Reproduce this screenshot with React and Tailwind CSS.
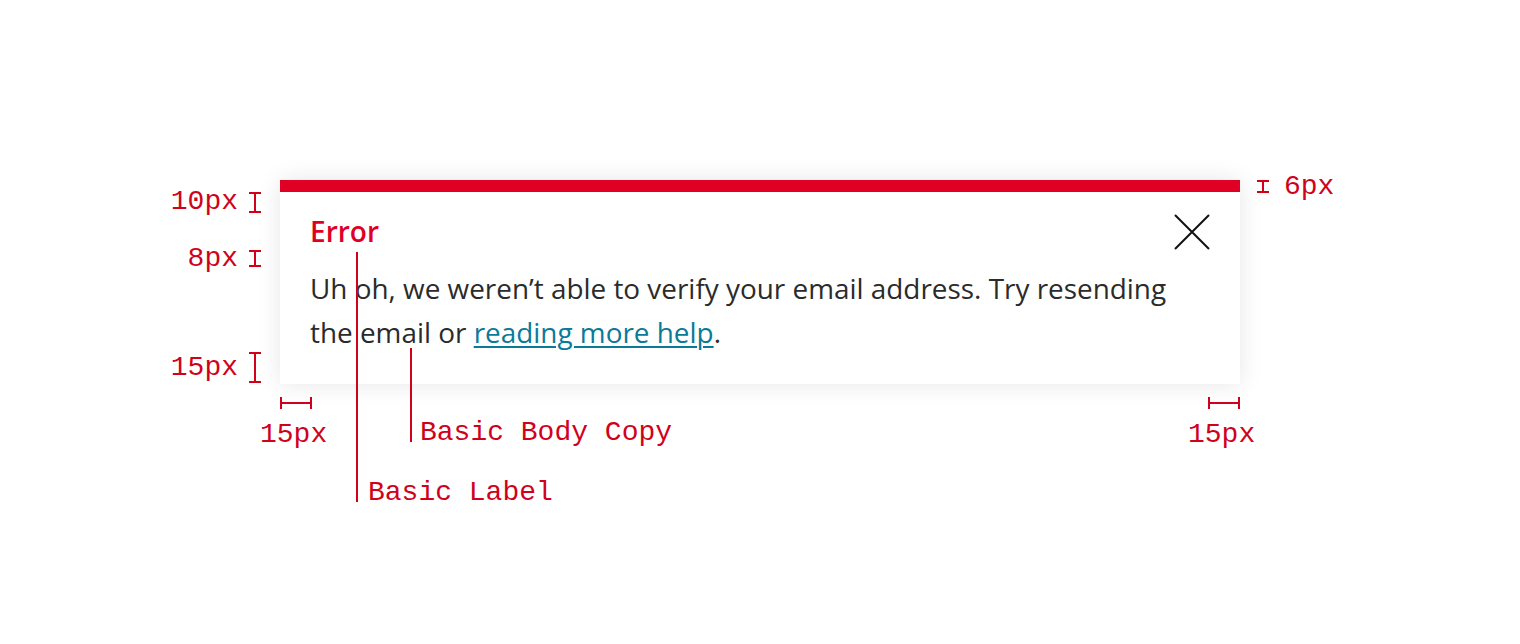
import React from 'react';

const RED = 'text-[#d0021b]';

// vertical dimension marker: stem with caps top and bottom
const VBeam = ({ className }) => (
    <div className={`absolute flex flex-col items-center w-[12px] ${className}`}>
        <div className="h-[2px] w-full bg-[#d0021b]" />
        <div className="flex-1 w-[2px] bg-[#d0021b]" />
        <div className="h-[2px] w-full bg-[#d0021b]" />
    </div>
);

// horizontal dimension marker
const HBeam = ({ className }) => (
    <div className={`absolute flex items-center h-[12px] ${className}`}>
        <div className="w-[2px] h-full bg-[#d0021b]" />
        <div className="flex-1 h-[2px] bg-[#d0021b]" />
        <div className="w-[2px] h-full bg-[#d0021b]" />
    </div>
);

const Note = ({ className, children }) => (
    <div className={`absolute whitespace-nowrap font-['Liberation_Mono',monospace] text-[28px] leading-[30px] ${RED} ${className}`}>
        {children}
    </div>
);

const CloseIcon = () => (
    <svg width="36" height="36" viewBox="0 0 36 36" fill="none" stroke="#111" strokeWidth="2">
        <path d="M1 1L35 35M35 1L1 35" />
    </svg>
);

export default function App() {
    return (
        <div className="w-[1520px] h-[644px] bg-white flex justify-center pt-[180px] font-['Open_Sans',sans-serif]">
            <div className="relative w-[960px] self-start">
                <div className="bg-white shadow-[0_0_22px_rgba(0,0,0,0.10)]">
                    <div className="h-[12px] bg-[#df0024]" />
                    <div className="relative px-[30px] pt-[20px] pb-[30px]">
                        <div className="text-[28px] leading-[38px] font-semibold text-[#df0024]">Error</div>
                        <p className="mt-[16px] pr-[40px] text-[27.9px] leading-[44px] text-[#2b2b2b]">
                            Uh oh, we weren’t able to verify your email address. Try resending the email or{' '}
                            <a href="#" className="text-[#0b7a99] underline underline-offset-[3px] decoration-[1.5px]">reading more help</a>.
                        </p>
                        <button className="absolute right-[30px] top-[22px]">
                            <CloseIcon />
                        </button>
                    </div>
                </div>

                {/* spec annotations */}
                <VBeam className="left-[-31px] top-[12px] h-[21px]" />
                <Note className="right-[1002px] top-[7px]">10px</Note>

                <VBeam className="left-[-31px] top-[70px] h-[17px]" />
                <Note className="right-[1002px] top-[64px]">8px</Note>

                <VBeam className="left-[-31px] top-[172px] h-[31px]" />
                <Note className="right-[1002px] top-[173px]">15px</Note>

                <VBeam className="left-[977px] top-[0px] h-[13px]" />
                <Note className="left-[1004px] top-[-8px]">6px</Note>

                <HBeam className="left-[0px] top-[217px] w-[32px]" />
                <Note className="left-[-20px] top-[240px]">15px</Note>

                <HBeam className="left-[928px] top-[217px] w-[32px]" />
                <Note className="left-[908px] top-[240px]">15px</Note>

                <div className="absolute left-[76px] top-[72px] w-[2px] h-[250px] bg-[#d0021b]" />
                <Note className="left-[88px] top-[298px]">Basic Label</Note>

                <div className="absolute left-[130px] top-[168px] w-[2px] h-[94px] bg-[#d0021b]" />
                <Note className="left-[140px] top-[238px]">Basic Body Copy</Note>
            </div>
        </div>
    );
}
